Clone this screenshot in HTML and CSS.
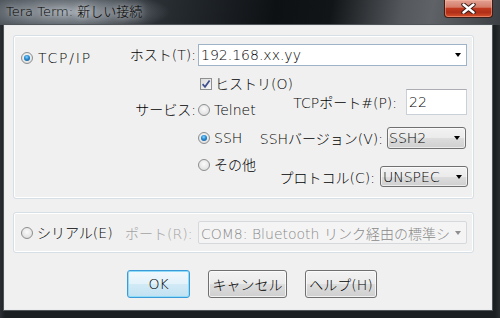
FILE: index.html
```html
<!DOCTYPE html>
<html lang="ja">
<head>
<meta charset="utf-8">
<link rel="stylesheet" href="styles.css">
</head>
<body>
<div class="titlebar">
  <span class="title">Tera Term: 新しい接続</span>
  <div class="close">
    <svg width="15" height="11" viewBox="0 0 15 11">
      <path d="M2.5 1.5 L12.5 9.5 M12.5 1.5 L2.5 9.5" stroke="#3b1a14" stroke-width="4.4" stroke-linecap="round" fill="none"/>
      <path d="M2.5 1.5 L12.5 9.5 M12.5 1.5 L2.5 9.5" stroke="#ffffff" stroke-width="2.4" stroke-linecap="round" fill="none"/>
    </svg>
  </div>
</div>
<div class="client">
  <div class="group g1">
    <div class="proto-col">
      <div class="radio tcp"><span class="rb on"></span><span class="rt">TCP/IP</span></div>
    </div>
    <div class="main-col">
      <div class="host-row">
        <span class="lbl">ホスト(T):</span>
        <div class="combo edit host"><span class="ct">192.168.xx.yy</span><span class="arrow"></span></div>
      </div>
      <div class="svc-row">
        <span class="lbl svc">サービス:</span>
        <div class="opts">
          <div class="r1">
            <div class="check"><span class="cb"><svg width="10" height="10" viewBox="0 0 10 10"><path d="M1.6 5.2 L4 7.8 L8.6 1.6" stroke="#3d4f8c" stroke-width="1.7" fill="none"/></svg></span><span class="rt">ヒストリ(O)</span></div>
          </div>
          <div class="r2">
            <div class="radio telnet"><span class="rb"></span><span class="rt">Telnet</span></div>
            <div class="pair port"><span class="plbl">TCPポート#(P):</span><div class="editbox">22</div></div>
          </div>
          <div class="r3">
            <div class="radio"><span class="rb on"></span><span class="rt">SSH</span></div>
            <div class="pair ver"><span class="plbl">SSHバージョン(V):</span><div class="combo list ssh"><span class="ct">SSH2</span><span class="arrow"></span></div></div>
          </div>
          <div class="r4">
            <div class="radio other"><span class="rb"></span><span class="rt">その他</span></div>
            <div class="pair proto"><span class="plbl">プロトコル(C):</span><div class="combo list unspec"><span class="ct">UNSPEC</span><span class="arrow"></span></div></div>
          </div>
        </div>
      </div>
    </div>
  </div>
  <div class="group g2">
    <div class="radio serial"><span class="rb"></span><span class="rt">シリアル(E)</span></div>
    <span class="lbl dis">ポート(R):</span>
    <div class="combo disabled com"><span class="ct">COM8: Bluetooth リンク経由の標準シ</span><span class="arrow"></span></div>
  </div>
  <div class="buttons">
    <div class="btn default ok">OK</div>
    <div class="btn cancel">キャンセル</div>
    <div class="btn help">ヘルプ(H)</div>
  </div>
</div>
</body>
</html>
```
FILE: styles.css
```css
* { box-sizing: border-box; }
html, body { margin: 0; padding: 0; }
body {
  width: 500px;
  height: 318px;
  overflow: hidden;
  background: linear-gradient(90deg, #2b2f33 0%, #1c1f22 1%, #1c1f22 99%, #2a2d30 100%);
  font-family: "DejaVu Sans", "Noto Sans CJK JP", sans-serif;
  font-weight: 300;
  font-size: 14px;
  color: #000;
}

.titlebar {
  height: 25px;
  display: flex;
  justify-content: space-between;
  align-items: flex-start;
  background:
    radial-gradient(ellipse 100px 22px at 70px 12px, rgba(165,172,180,0.95), rgba(165,172,180,0) 100%),
    linear-gradient(100deg, #454c52 0%, #2b3136 30%, #0e1114 55%, #121518 66%, #54585c 80%, #5f6367 86%, #3c4044 100%);
}
.title {
  margin: 4px 0 0 6px;
  font-size: 13px;
  line-height: 16px;
  color: #000;
  text-shadow: 0 0 6px rgba(255,255,255,0.7), 0 0 12px rgba(230,235,240,0.6);
}
.close {
  width: 49px;
  height: 18px;
  margin-right: 7px;
  border: 1px solid #3f1c16;
  border-top: none;
  border-radius: 0 0 4px 4px;
  background: linear-gradient(#e3a293 0%, #d57c69 42%, #c0391e 50%, #b02e18 72%, #d4502a 100%);
  box-shadow: inset 0 0 0 1px rgba(255,190,170,0.45);
  display: flex;
  align-items: center;
  justify-content: center;
  padding-bottom: 1px;
}

.client {
  margin-left: 4px;
  width: 488px;
  height: 285px;
  background: #f0f0f0;
  border: 1px solid #e9ebed;
  box-shadow: 0 0 0 1px #50555a;
  display: flex;
  flex-direction: column;
}

.group {
  margin-left: 8px;
  width: 461px;
  border: 1px solid #d5dfe5;
  border-radius: 3px;
  box-shadow: inset 0 0 0 1px #ffffff;
}
.g1 {
  margin-top: 9px;
  height: 164px;
  display: flex;
}
.proto-col { width: 115px; padding: 16px 0 0 7px; }

.radio, .check { display: flex; align-items: center; height: 12px; }
.rb {
  width: 12px; height: 12px;
  border-radius: 50%;
  border: 1px solid #8c8e90;
  background: radial-gradient(circle at 50% 40%, #fbfbfb 0%, #e6e6e6 60%, #d2d2d2 100%);
  flex: none;
  position: relative;
}
.rb.on::after {
  content: "";
  position: absolute;
  left: 2px; top: 2px;
  width: 6px; height: 6px;
  border-radius: 50%;
  background: radial-gradient(circle at 45% 35%, #8fd7ff 0%, #2a8fd6 40%, #0b4c86 100%);
}
.rt { line-height: 14px; white-space: nowrap; }
.radio .rt { margin-left: 4px; }
.tcp .rt { margin-left: 5px; letter-spacing: 1.8px; }

.main-col { width: 339px; display: flex; flex-direction: column; }
.lbl { width: 69px; text-align: right; padding-right: 2px; white-space: nowrap; }
.host-row { margin-top: 8px; height: 22px; display: flex; }
.host-row .lbl { line-height: 22px; }

.combo {
  display: flex;
  align-items: center;
  overflow: hidden;
  white-space: nowrap;
}
.combo .ct { flex: 1; overflow: hidden; }
.arrow {
  flex: none;
  width: 0; height: 0;
  border-left: 3.5px solid transparent;
  border-right: 3.5px solid transparent;
  border-top: 4px solid #000;
  margin: 0 5px 0 4px;
}
.edit { background: #fff; border: 1px solid #9fb3c8; }
.host { width: 269px; height: 22px; padding-left: 2px; }

.svc-row { display: flex; }
.svc { margin-top: 34px; line-height: 20px; height: 20px; }
.opts { width: 270px; display: flex; flex-direction: column; }
.r1 { height: 24px; display: flex; align-items: flex-end; }
.check { margin-left: 2px; }
.cb {
  width: 12px; height: 12px;
  border: 1px solid #8e8f8f;
  background: linear-gradient(135deg, #dcdcdc, #f7f7f7);
  display: flex; align-items: center; justify-content: center;
  flex: none;
}
.check .rt { margin-left: 3px; }

.r2 { margin-top: -1px; height: 28px; display: flex; align-items: flex-end; }
.telnet { margin-bottom: 1px; }
.pair { display: flex; align-items: center; margin-left: auto; white-space: nowrap; }
.port { align-self: flex-start; height: 26px; margin-right: 1px; }
.editbox {
  width: 61px; height: 26px;
  margin-left: 9px;
  background: #fff;
  border: 1px solid #c9d0d8;
  border-top-color: #abadb3;
  padding: 2px 0 0 2px;
  line-height: 20px;
}

.r3 { margin-top: 10px; height: 22px; display: flex; align-items: center; }
.ver { margin-right: 2px; }
.list {
  border: 1px solid #707070;
  border-radius: 3px;
  background: linear-gradient(#f2f2f2 0%, #ebebeb 50%, #dddddd 51%, #cfcfcf 100%);
  box-shadow: inset 0 0 0 1px rgba(255,255,255,0.6);
}
.ssh { width: 79px; height: 22px; margin-left: 4px; padding-left: 1px; }

.r4 { margin-top: 6px; height: 33px; display: flex; }
.other { margin-top: 4px; }
.proto { align-self: flex-end; margin-bottom: 1px; }
.unspec { width: 88px; height: 21px; margin-left: 5px; padding-left: 2px; }

.g2 {
  margin-top: 13px;
  height: 41px;
  display: flex;
  align-items: center;
  padding-left: 7px;
}
.serial { width: 104px; }
.dis { color: #a3a3a3; width: 73px; padding-right: 6px; }
.disabled {
  background: #f4f4f4;
  border: 1px solid #d6d9dc;
  border-radius: 2px;
  color: #8a8a8a;
}
.disabled .arrow { border-top-color: #8f8f8f; }
.com { width: 269px; height: 23px; padding-left: 2px; }

.buttons { margin-top: 17px; padding-left: 122px; display: flex; gap: 18px; }
.btn {
  height: 28px;
  border: 1px solid #707070;
  border-radius: 3px;
  background: linear-gradient(#f2f2f2 0%, #ebebeb 50%, #dddddd 51%, #cfcfcf 100%);
  box-shadow: inset 0 0 0 1px rgba(255,255,255,0.7);
  display: flex; align-items: center; justify-content: center;
  white-space: nowrap;
}
.default {
  border-color: #3c9ad6;
  background: linear-gradient(#f1f8fc 0%, #e3f2fa 50%, #d2eaf6 51%, #c1e1f1 100%);
  box-shadow: inset 0 0 0 1px #8fdcf8;
}
.ok { width: 63px; }
.cancel { width: 79px; }
.help { width: 72px; }
```
